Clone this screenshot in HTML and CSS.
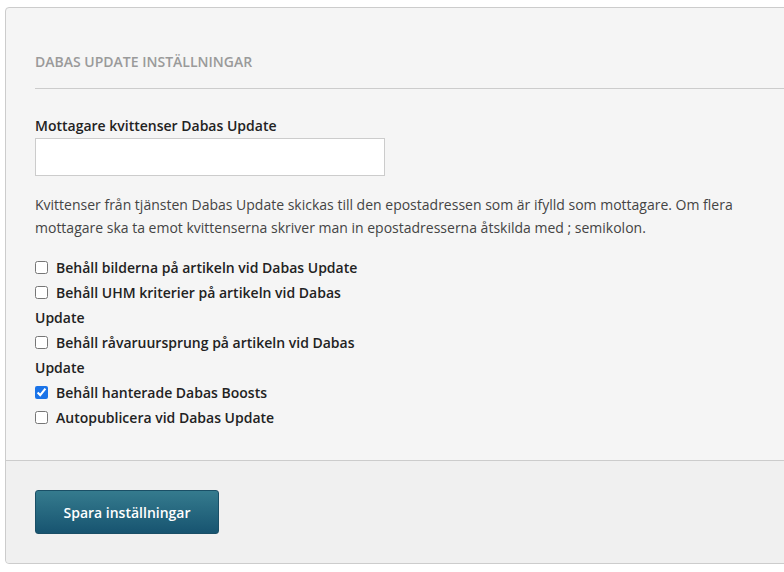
FILE: index.html
```
<!DOCTYPE html>
<html lang="sv">
<head>
<meta charset="utf-8">
<link rel="stylesheet" href="styles.css">
</head>
<body>
<div class="panel">
  <div class="panel-body">
    <h2 class="panel-title">Dabas Update inställningar</h2>
    <label class="field-label" for="rcpt">Mottagare kvittenser Dabas Update</label>
    <input class="text-input" id="rcpt" type="text">
    <p class="help">Kvittenser från tjänsten Dabas Update skickas till den epostadressen som är ifylld som mottagare. Om flera mottagare ska ta emot kvittenserna skriver man in epostadresserna åtskilda med ; semikolon.</p>
    <div class="checks">
      <label class="check"><input type="checkbox">Behåll bilderna på artikeln vid Dabas Update</label>
      <label class="check"><input type="checkbox">Behåll UHM kriterier på artikeln vid Dabas Update</label>
      <label class="check"><input type="checkbox">Behåll råvaruursprung på artikeln vid Dabas Update</label>
      <label class="check"><input type="checkbox" checked>Behåll hanterade Dabas Boosts</label>
      <label class="check"><input type="checkbox">Autopublicera vid Dabas Update</label>
    </div>
  </div>
  <div class="panel-footer">
    <button class="btn-primary" type="button">Spara inställningar</button>
  </div>
</div>
</body>
</html>
```
FILE: styles.css
```
html, body {
  margin: 0;
  padding: 0;
  background: #ffffff;
  overflow: hidden;
}
body {
  font-family: "Open Sans", "Liberation Sans", sans-serif;
  color: #333333;
  font-size: 14px;
}
.panel {
  margin: 7px 0 0 5px;
  width: 820px;
  border: 1px solid #cccccc;
  border-radius: 4px;
  background: #f5f5f5;
}
.panel-body {
  padding: 45px 0 30px 29px;
}
.panel-title {
  margin: 0;
  padding-bottom: 17px;
  border-bottom: 1px solid #cccccc;
  font-size: 14px;
  line-height: 18px;
  font-weight: 600;
  text-transform: uppercase;
  color: #9a9a9a;
}
.field-label {
  display: block;
  margin-top: 27px;
  font-weight: 600;
  font-size: 14px;
  line-height: 20px;
  color: #222222;
}
.text-input {
  display: block;
  box-sizing: border-box;
  margin-top: 2px;
  width: 350px;
  height: 38px;
  border: 1px solid #cccccc;
  background: #ffffff;
  padding: 0 8px;
  font: inherit;
}
.help {
  margin: 17px 0 0;
  width: 735px;
  line-height: 23px;
  color: #444444;
}
.checks {
  margin-top: 16px;
  width: 350px;
}
.check {
  display: block;
  line-height: 25px;
  font-weight: 600;
  color: #222222;
}
.check input {
  width: 13px;
  height: 13px;
  margin: 0 8px 0 0;
  vertical-align: -1px;
  accent-color: #1a73e8;
}
.panel-footer {
  border-top: 1px solid #cccccc;
  background: #f0f0f0;
  padding: 29px 0 29px 29px;
  border-radius: 0 0 4px 4px;
}
.btn-primary {
  display: block;
  width: 184px;
  height: 44px;
  border: 1px solid #1a4f66;
  border-radius: 3px;
  background: linear-gradient(#357b8e, #175470);
  color: #ffffff;
  font-family: inherit;
  font-size: 14px;
  font-weight: 600;
}
```
